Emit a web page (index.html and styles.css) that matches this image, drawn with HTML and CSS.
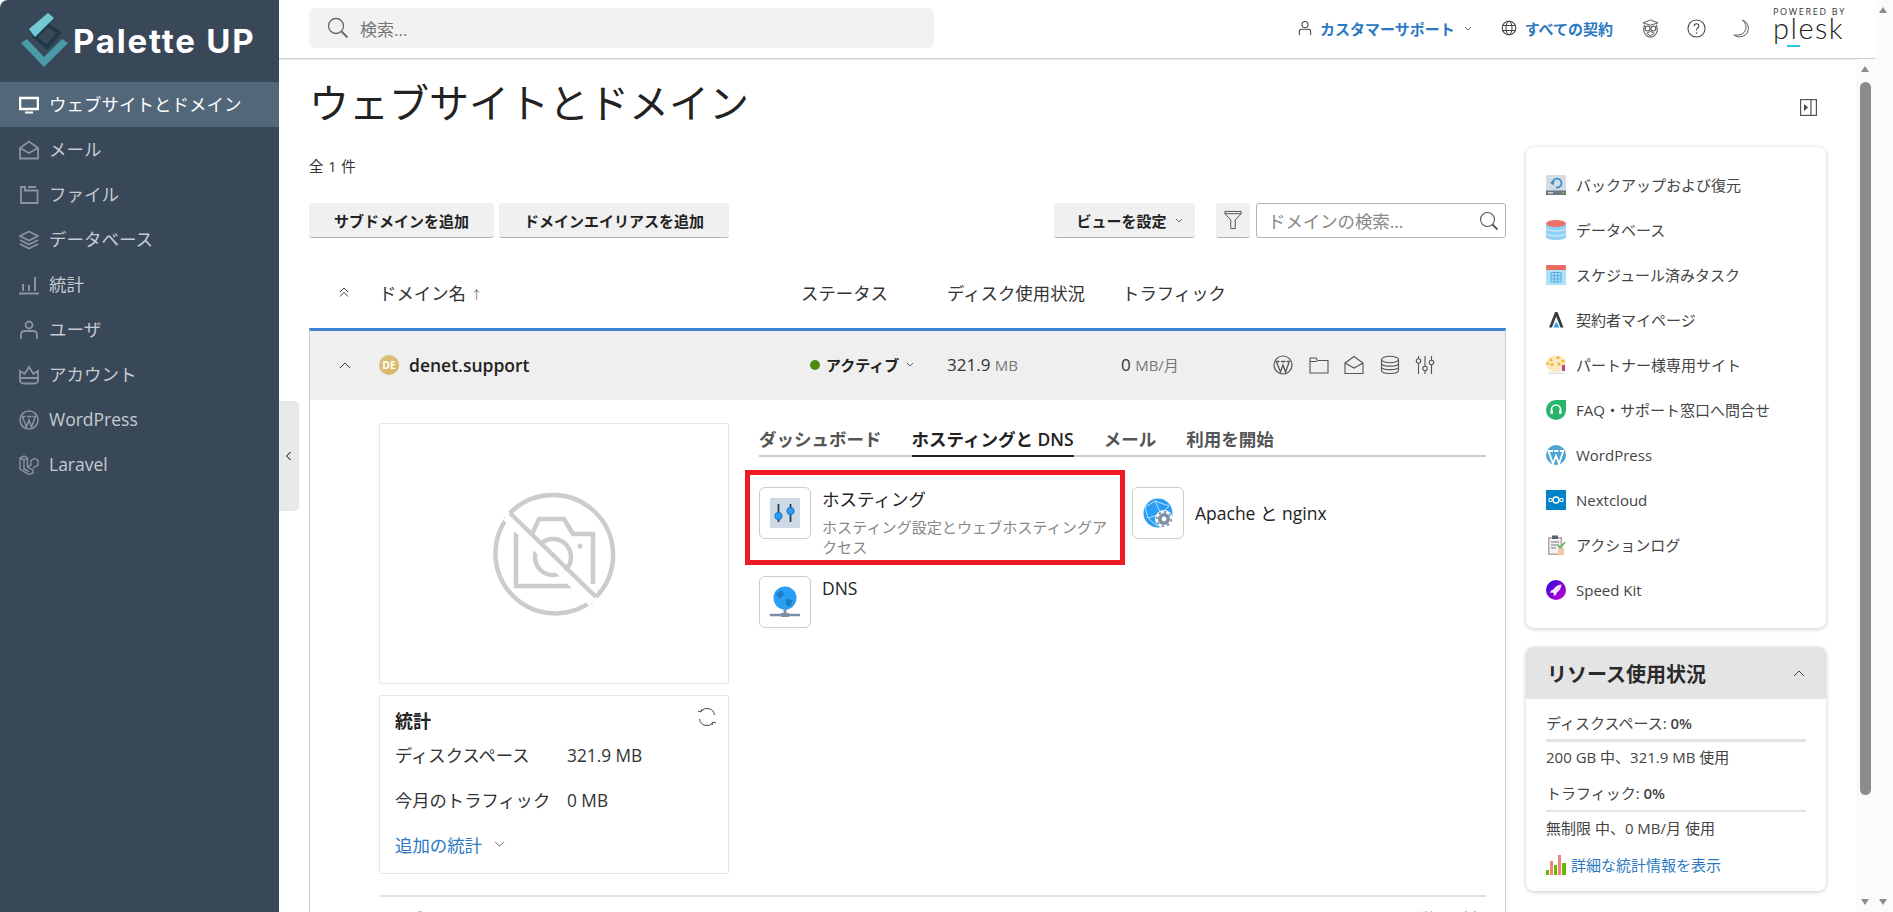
FILE: index.html
```html
<!DOCTYPE html>
<html lang="ja">
<head>
    <meta charset="UTF-8">
    <meta name="viewport" content="width=device-width, initial-scale=1.0">
    <title>ウェブサイトとドメイン</title>
    <link rel="stylesheet" href="styles.css">
</head>
<body>
<div class="app">
    <aside class="sidebar">
        <div class="brand">
            <svg class="brand-mark" viewBox="0 0 50 56" width="50" height="56">
                <path d="M28 13 L39 21 L27 35 L15 25 Z" fill="none" stroke="#1f3a46" stroke-width="4"/>
                <path d="M9 17 L28 1 L34 6 L15 25 Z" fill="#73c8d6"/>
                <path d="M1 31 L24 55 L48 31 L42 27 L24 45 L7 27 Z" fill="#4a9ba8"/>
            </svg>
            <span class="brand-name">Palette UP</span>
        </div>
        <nav class="menu">
            <a class="menu-item active" href="#">
                <svg viewBox="0 0 20 20"><rect x="1" y="3" width="18" height="11" fill="none" stroke="currentColor" stroke-width="2.5"/><rect x="6" y="16.5" width="8" height="2" fill="currentColor"/></svg>
                <span>ウェブサイトとドメイン</span>
            </a>
            <a class="menu-item" href="#">
                <svg viewBox="0 0 20 20"><path d="M1 8 L10 1.5 L19 8 V18.5 H1 Z M1 8 L10 13 L19 8" fill="none" stroke="currentColor" stroke-width="1.8"/></svg>
                <span>メール</span>
            </a>
            <a class="menu-item" href="#">
                <svg viewBox="0 0 20 20"><path d="M2 2 H6 V5.5 H18.5 V18 H2 Z M9 2 H17" fill="none" stroke="currentColor" stroke-width="1.8"/></svg>
                <span>ファイル</span>
            </a>
            <a class="menu-item" href="#">
                <svg viewBox="0 0 20 20"><path d="M10 1.5 L19 6 L10 10.5 L1 6 Z M1 10 L10 14.5 L19 10 M1 14 L10 18.5 L19 14" fill="none" stroke="currentColor" stroke-width="1.8"/></svg>
                <span>データベース</span>
            </a>
            <a class="menu-item" href="#">
                <svg viewBox="0 0 20 20"><path d="M0 18.5 H20 M4 16 V9 M10 16 V10 M16 16 V2" fill="none" stroke="currentColor" stroke-width="2"/></svg>
                <span>統計</span>
            </a>
            <a class="menu-item" href="#">
                <svg viewBox="0 0 20 20"><circle cx="10" cy="5" r="3.5" fill="none" stroke="currentColor" stroke-width="1.8"/><path d="M2 19 V15 Q2 11 6 11 H14 Q18 11 18 15 V19" fill="none" stroke="currentColor" stroke-width="1.8"/></svg>
                <span>ユーザ</span>
            </a>
            <a class="menu-item" href="#">
                <svg viewBox="0 0 20 20"><path d="M1 6 L5.5 9 L10 2 L14.5 9 L19 6 V15 Q19 18.5 15 18.5 H5 Q1 18.5 1 15 Z M1 13 H19" fill="none" stroke="currentColor" stroke-width="1.8"/></svg>
                <span>アカウント</span>
            </a>
            <a class="menu-item" href="#">
                <svg viewBox="0 0 20 20"><circle cx="10" cy="10" r="9" fill="none" stroke="currentColor" stroke-width="1.5"/><path d="M3.5 7 L7.5 17 L10 10 L12.5 17 L16 7.5 M2.5 6.5 H6.5 M8 6.5 H12.5 M13.5 6.5 H17" fill="none" stroke="currentColor" stroke-width="1.5"/></svg>
                <span>WordPress</span>
            </a>
            <a class="menu-item" href="#">
                <svg viewBox="0 0 20 20"><path d="M1 3 L5 1 L8.5 3 V12 L14 15 V18 L10 19.5 L1 14 Z M8.5 12 L12 10 V5.5 L15.5 3.5 L19 5.5 V10 L14 13 M1 3 L5 5 L8.5 3 M5 5 V14 L10 16.5" fill="none" stroke="currentColor" stroke-width="1.4"/></svg>
                <span>Laravel</span>
            </a>
        </nav>
    </aside>

    <div class="collapse-tab">
        <svg viewBox="0 0 10 12" width="8" height="10"><path d="M7 1 L2 6 L7 11" fill="none" stroke="#333" stroke-width="1.3"/></svg>
    </div>

    <div class="main">
        <header class="topbar">
            <div class="global-search">
                <svg viewBox="0 0 22 22" width="22" height="22"><circle cx="9" cy="9" r="7.5" fill="none" stroke="#666" stroke-width="1.3"/><path d="M14.5 14.5 L20.5 20.5" stroke="#666" stroke-width="1.8"/></svg>
                <span>検索...</span>
            </div>
            <div class="topbar-right">
                <a class="top-link" href="#">
                    <svg viewBox="0 0 16 18" width="14" height="16"><circle cx="8" cy="5" r="3.5" fill="none" stroke="#444" stroke-width="1.2"/><path d="M1.5 17 V13 Q1.5 10.5 4 10.5 H12 Q14.5 10.5 14.5 13 V17" fill="none" stroke="#444" stroke-width="1.2"/></svg>
                    <span>カスタマーサポート</span>
                    <svg class="caret" viewBox="0 0 8 5" width="8" height="5"><path d="M1 1 L4 4 L7 1" fill="none" stroke="#666" stroke-width="1"/></svg>
                </a>
                <a class="top-link subs" href="#">
                    <svg viewBox="0 0 16 16" width="16" height="16"><circle cx="8" cy="8" r="6.8" fill="none" stroke="#444" stroke-width="1.1"/><ellipse cx="8" cy="8" rx="3" ry="6.8" fill="none" stroke="#444" stroke-width="1"/><path d="M1.5 5.5 H14.5 M1.5 10.5 H14.5" stroke="#444" stroke-width="1"/></svg>
                    <span>すべての契約</span>
                </a>
                <svg class="top-icon owl" viewBox="0 0 18 20" width="17" height="19"><path d="M1 4 L9 1 L17 4 L9 6.5 Z" fill="none" stroke="#555" stroke-width="1"/><path d="M3 6 Q1 10 2 13 Q4 19 9 19 Q14 19 16 13 Q17 10 15 6" fill="none" stroke="#555" stroke-width="1.1"/><circle cx="6" cy="10" r="2.6" fill="none" stroke="#555" stroke-width="1.1"/><circle cx="12" cy="10" r="2.6" fill="none" stroke="#555" stroke-width="1.1"/><path d="M5 15 L9 13 L13 15 L9 18 Z" fill="none" stroke="#555" stroke-width="1"/></svg>
                <svg class="top-icon help" viewBox="0 0 20 20" width="19" height="19"><circle cx="10" cy="10" r="9" fill="none" stroke="#444" stroke-width="1.1"/><path d="M7.5 7.5 Q7.5 5 10 5 Q12.5 5 12.5 7.2 Q12.5 8.8 10.8 9.8 Q10 10.4 10 12" fill="none" stroke="#444" stroke-width="1.1"/><circle cx="10" cy="14.8" r=".8" fill="#444"/></svg>
                <svg class="top-icon moon" viewBox="0 0 18 20" width="17" height="19"><path d="M11 1 Q16 5 14.5 11 Q12.5 18 2 17 Q6 20 11 18.5 Q18 16 17.3 8.5 Q16.5 3 11 1 Z" fill="#fff" stroke="#555" stroke-width="1"/></svg>
                <div class="plesk">
                    <span class="plesk-by">POWERED BY</span>
                    <span class="plesk-name">plesk</span>
                    <i class="plesk-dash"></i>
                </div>
            </div>
        </header>

        <div class="workspace">
            <div class="content">
                <div class="title-row">
                    <h1>ウェブサイトとドメイン</h1>
                    <svg class="panel-toggle" viewBox="0 0 17 17" width="17" height="17"><rect x=".6" y=".6" width="15.8" height="15.8" fill="none" stroke="#555" stroke-width="1.2"/><path d="M11 1 V16" stroke="#555" stroke-width="1.2"/><path d="M4 5 L8 8.5 L4 12 Z" fill="#444"/></svg>
                </div>
                <div class="columns">
                    <section class="domains">
                        <p class="count">全 1 件</p>
                        <div class="toolbar">
                            <button class="btn">サブドメインを追加</button>
                            <button class="btn">ドメインエイリアスを追加</button>
                            <div class="toolbar-right">
                                <button class="btn btn-view">ビューを設定<svg class="caret" viewBox="0 0 8 5" width="8" height="5"><path d="M1 1 L4 4 L7 1" fill="none" stroke="#666" stroke-width="1"/></svg></button>
                                <button class="btn btn-filter"><svg viewBox="0 0 20 22" width="18" height="20"><path d="M1 1.5 H19 V4 L12.5 11 V20.5 H7.5 V11 L1 4 Z M1 4 H19" fill="none" stroke="#555" stroke-width="1.1"/></svg></button>
                                <div class="domain-search">
                                    <span>ドメインの検索...</span>
                                    <svg viewBox="0 0 20 20" width="20" height="20"><circle cx="8.5" cy="8.5" r="7" fill="none" stroke="#555" stroke-width="1.1"/><path d="M13.5 13.5 L18.5 18.5" stroke="#555" stroke-width="1.8"/></svg>
                                </div>
                            </div>
                        </div>

                        <div class="table-head">
                            <svg viewBox="0 0 12 12" width="12" height="12"><path d="M2 6 L6 2 L10 6 M2 10.5 L6 6.5 L10 10.5" fill="none" stroke="#444" stroke-width="1"/></svg>
                            <span class="head-name">ドメイン名 <small>↑</small></span>
                            <span>ステータス</span>
                            <span>ディスク使用状況</span>
                            <span>トラフィック</span>
                        </div>

                        <div class="domain">
                            <div class="domain-row">
                                <svg viewBox="0 0 12 8" width="12" height="8"><path d="M1 7 L6 2 L11 7" fill="none" stroke="#444" stroke-width="1"/></svg>
                                <div class="domain-name"><i class="avatar">DE</i><strong>denet.support</strong></div>
                                <div class="status"><i class="dot"></i><b>アクティブ</b><svg class="caret" viewBox="0 0 8 5" width="8" height="5"><path d="M1 1 L4 4 L7 1" fill="none" stroke="#666" stroke-width="1"/></svg></div>
                                <div class="usage">321.9 <small>MB</small></div>
                                <div class="usage">0 <small>MB/月</small></div>
                                <div class="row-icons">
                                    <svg viewBox="0 0 20 20"><circle cx="10" cy="10" r="9" fill="none" stroke="#555" stroke-width="1.2"/><path d="M3.5 7 L7.5 17 L10 10 L12.5 17 L16 7.5 M2.5 6.5 H6.5 M8 6.5 H12.5 M13.5 6.5 H17" fill="none" stroke="#555" stroke-width="1.3"/></svg>
                                    <svg viewBox="0 0 20 20"><path d="M1 3 H7 L8.5 5.5 H19 V18 H1 Z M1 6.5 H8" fill="none" stroke="#555" stroke-width="1.1"/></svg>
                                    <svg viewBox="0 0 20 20"><path d="M1 8 L10 1.5 L19 8 V18.5 H1 Z M1 8 L10 13 L19 8" fill="none" stroke="#555" stroke-width="1.1"/></svg>
                                    <svg viewBox="0 0 20 20"><ellipse cx="10" cy="4.5" rx="8.5" ry="3.2" fill="none" stroke="#555" stroke-width="1.1"/><path d="M1.5 4.5 V15.5 C1.5 19.5 18.5 19.5 18.5 15.5 V4.5 M1.5 8.5 C1.5 12 18.5 12 18.5 8.5 M1.5 12 C1.5 15.5 18.5 15.5 18.5 12" fill="none" stroke="#555" stroke-width="1.1"/></svg>
                                    <svg viewBox="0 0 20 20"><path d="M3.5 1 V19 M10 1 V19 M16.5 1 V19" stroke="#555" stroke-width="1.1"/><circle cx="3.5" cy="6" r="2.2" fill="#efefef" stroke="#555" stroke-width="1.1"/><circle cx="10" cy="13.5" r="2.2" fill="#efefef" stroke="#555" stroke-width="1.1"/><circle cx="16.5" cy="7.5" r="2.2" fill="#efefef" stroke="#555" stroke-width="1.1"/></svg>
                                </div>
                            </div>
                            <div class="domain-body">
                                <div class="side">
                                    <div class="preview">
                                        <svg viewBox="0 0 124 124" width="124" height="124" fill="none" stroke="#ccc" stroke-width="4.5">
                                            <path d="M33 42 H24 V94 H81 M40 42 L47 27 H72 L81 42 H101 V92"/>
                                            <circle cx="61" cy="65" r="18"/>
                                            <circle cx="88" cy="54" r="2.5" fill="#ccc" stroke="none"/>
                                            <path d="M18 21 A60 60 0 1 1 104 105"/>
                                            <path d="M15 26 A60 60 0 0 0 100 109"/>
                                            <path d="M14 25 L100 111" stroke="#fff" stroke-width="8"/>
                                            <path d="M18 21 L104 105"/>
                                        </svg>
                                    </div>
                                    <div class="stats">
                                        <h3>統計</h3>
                                        <svg class="refresh" viewBox="0 0 20 20" width="20" height="20"><path d="M17.5 8 A7.5 7.5 0 0 0 4 4.5 M2.5 12 A7.5 7.5 0 0 0 16 15.5 M1 4 L3.5 5 L5 2 M19 16 L16.5 15 L15 18" fill="none" stroke="#444" stroke-width="1"/></svg>
                                        <dl>
                                            <dt>ディスクスペース</dt><dd>321.9 MB</dd>
                                            <dt>今月のトラフィック</dt><dd>0 MB</dd>
                                        </dl>
                                        <a class="more" href="#">追加の統計<svg viewBox="0 0 12 8" width="11" height="7"><path d="M1 1 L6 6 L11 1" fill="none" stroke="#555" stroke-width="1"/></svg></a>
                                    </div>
                                </div>
                                <div class="panel">
                                    <div class="tabs">
                                        <a href="#">ダッシュボード</a>
                                        <a class="current" href="#">ホスティングと DNS</a>
                                        <a href="#">メール</a>
                                        <a href="#">利用を開始</a>
                                    </div>
                                    <div class="tools">
                                        <div class="tool tool-marked">
                                            <div class="tile">
                                                <svg viewBox="0 0 30 30" width="30" height="30"><rect width="30" height="30" fill="#cdd9e4"/><path d="M8.5 6 V24 M20.5 6 V24" stroke="#2b3a4c" stroke-width="1.8"/><circle cx="8.5" cy="18" r="3.6" fill="#2a9df4" stroke="#1074c4"/><circle cx="20.5" cy="13" r="3.6" fill="#2a9df4" stroke="#1074c4"/></svg>
                                            </div>
                                            <div class="tool-text">
                                                <h4>ホスティング</h4>
                                                <p>ホスティング設定とウェブホスティングアクセス</p>
                                            </div>
                                        </div>
                                        <div class="tool tool-center">
                                            <div class="tile">
                                                <svg viewBox="0 0 30 30" width="30" height="30"><circle cx="15" cy="15" r="14.5" fill="#2a9df4"/><path d="M2 9 L12 3 L26 8 L18 16 L5 20 Z M12 3 L18 16 M5 20 L14 28" fill="none" stroke="#b9e2fb" stroke-width="1"/><circle cx="21" cy="21" r="9" fill="#fff"/><circle cx="21" cy="21" r="6" fill="#7d8fa6"/><circle cx="21" cy="21" r="2.4" fill="#fff"/><circle cx="21" cy="21" r="7.2" fill="none" stroke="#7d8fa6" stroke-width="1.8" stroke-dasharray="2.5 3.1"/></svg>
                                            </div>
                                            <div class="tool-text"><h4>Apache と nginx</h4></div>
                                        </div>
                                        <div class="tool">
                                            <div class="tile">
                                                <svg viewBox="0 0 30 32" width="30" height="32"><circle cx="15" cy="12" r="11.5" fill="#2a9df4"/><path d="M6 8 L12 4 L14 9 L9 13 Z M16 13 L23 14 L20 21 L16 19 Z" fill="#1d7cc4"/><path d="M15 23 V28" stroke="#7d8fa6" stroke-width="3"/><path d="M0 29 H30" stroke="#7d8fa6" stroke-width="2.5"/><rect x="11" y="27" width="8" height="4" fill="#7d8fa6"/></svg>
                                            </div>
                                            <div class="tool-text"><h4>DNS</h4></div>
                                        </div>
                                    </div>
                                </div>
                            </div>
                            <div class="domain-foot">
                                <p>ウェブサイト: <a href="#">denet.support</a>　IP アドレス: <b>133.167.231.23</b>　システムユーザー: <b>pfxxxxxx</b></p>
                                <a href="#">詳細を追加</a>
                            </div>
                        </div>
                    </section>

                    <aside class="right">
                        <div class="card links">
                            <a href="#"><svg viewBox="0 0 20 20"><rect y="0" width="20" height="20" rx="1.5" fill="#d3dde3"/><rect y="15.5" width="20" height="4.5" fill="#6c7a86"/><rect x="2" y="17" width="5" height="1.5" fill="#cfd6db"/><rect x="16" y="17" width="2" height="1.5" fill="#8bc34a"/><path d="M6.5 8.5 A4.5 4.5 0 1 1 10 12.5" fill="none" stroke="#3d8fc8" stroke-width="1.8"/><path d="M3.8 7.5 L8.5 6 L7.5 10.5 Z" fill="#3d8fc8"/></svg><span>バックアップおよび復元</span></a>
                            <a href="#"><svg viewBox="0 0 20 20"><path d="M0 3 H20 V17 C20 21 0 21 0 17 Z" fill="#8fd0f4"/><path d="M0 8 C0 12 20 12 20 8 M0 13 C0 17 20 17 20 13" fill="none" stroke="#dff3fd" stroke-width="1"/><ellipse cx="10" cy="3.5" rx="10" ry="3.5" fill="#f0706a"/></svg><span>データベース</span></a>
                            <a href="#"><svg viewBox="0 0 20 20"><rect y="1" width="20" height="19" fill="#aee0fa"/><rect y="0" width="20" height="5" rx="1" fill="#ee6b66"/><path d="M5 7.5 H15 V17 H5 Z M8.3 7.5 V17 M11.7 7.5 V17 M5 10.7 H15 M5 13.9 H15" fill="none" stroke="#4a9fd4" stroke-width=".8"/></svg><span>スケジュール済みタスク</span></a>
                            <a href="#"><svg viewBox="0 0 20 20"><path d="M3 17.5 L9 2 H11.5 L17.5 17.5 H14.5 L10.2 6.5 L6 17.5 Z" fill="#3c3c3c"/><path d="M10.2 11.5 L13.5 17.5 H7.5 Z" fill="#2a9df4"/></svg><span>契約者マイページ</span></a>
                            <a href="#"><svg viewBox="0 0 20 20"><ellipse cx="10" cy="9" rx="10" ry="8.5" fill="#fbe7c0"/><circle cx="5" cy="5" r="1.5" fill="#f5b32e"/><circle cx="12" cy="2.5" r="1.5" fill="#f5b32e"/><circle cx="6" cy="9.5" r="1.5" fill="#f5b32e"/><circle cx="13" cy="9" r="1.5" fill="#f5b32e"/><circle cx="1.5" cy="8.5" r="1.3" fill="#f5b32e"/><circle cx="17" cy="6" r="1.5" fill="#f5b32e"/><rect x="16" y="10" width="3" height="6" fill="#c2438a"/><rect x="2" y="17.5" width="16" height="1.5" fill="#dde3e6"/></svg><span>パートナー様専用サイト</span></a>
                            <a href="#"><svg viewBox="0 0 20 20"><path d="M10 0 H20 V10 A10 10 0 1 1 10 0 Z" fill="#27b56c"/><path d="M5.5 12 V9.5 A4.5 4.5 0 0 1 14.5 9.5 V12" fill="none" stroke="#fff" stroke-width="1.6"/><rect x="4.5" y="10" width="2.5" height="4" rx="1" fill="#fff"/><rect x="13" y="10" width="2.5" height="4" rx="1" fill="#fff"/></svg><span>FAQ・サポート窓口へ問合せ</span></a>
                            <a href="#"><svg viewBox="0 0 20 20"><circle cx="10" cy="10" r="10" fill="#4ea6d0"/><path d="M2.5 6.5 L7 18.5 L10 11 L13 18.5 L17 7 M1.5 6 H7 M8 6 H12.5 M14 6 H18" fill="none" stroke="#fff" stroke-width="1.8"/></svg><span>WordPress</span></a>
                            <a href="#"><svg viewBox="0 0 20 20"><rect width="20" height="20" fill="#0082c9"/><circle cx="10" cy="10" r="3" fill="none" stroke="#fff" stroke-width="1.3"/><circle cx="4.5" cy="10" r="1.7" fill="none" stroke="#fff" stroke-width="1.1"/><circle cx="15.5" cy="10" r="1.7" fill="none" stroke="#fff" stroke-width="1.1"/></svg><span>Nextcloud</span></a>
                            <a href="#"><svg viewBox="0 0 20 20"><rect x="2" y="2" width="14" height="18" fill="#b9a59c"/><rect x="3.5" y="3.5" width="11" height="15" fill="#f4f2ef"/><rect x="6" y="0.5" width="6" height="3.5" fill="#56636e"/><path d="M5 7 H13 M5 10 H12 M5 13 H10" stroke="#6d7b86" stroke-width="1.1"/><path d="M12 10 L14 13 L19 7" fill="none" stroke="#63b955" stroke-width="1.8"/><path d="M12 20 V14 L18 12.5 V20 Z" fill="#f6c4a6"/></svg><span>アクションログ</span></a>
                            <a href="#"><svg viewBox="0 0 20 20"><defs><linearGradient id="speed" x1="0" y1="0" x2="1" y2="1"><stop offset="0" stop-color="#2d07d8"/><stop offset="1" stop-color="#c502d2"/></linearGradient></defs><circle cx="10" cy="10" r="10" fill="url(#speed)"/><path d="M15.5 4.5 Q10 5 7.5 9.5 L5 10.5 L4 13 L6.5 12.5 L8 14 L7.5 16 L10 15 L11 12.5 Q15 10 15.5 4.5 Z" fill="#f4e6ff"/></svg><span>Speed Kit</span></a>
                        </div>
                        <div class="card resources">
                            <div class="resources-head">
                                <h2>リソース使用状況</h2>
                                <svg viewBox="0 0 12 8" width="12" height="8"><path d="M1 7 L6 2 L11 7" fill="none" stroke="#444" stroke-width="1"/></svg>
                            </div>
                            <div class="resources-body">
                                <div class="meter">ディスクスペース: <b>0%</b></div>
                                <div class="bar bar-thick"></div>
                                <div class="meter-sub">200 GB 中、321.9 MB 使用</div>
                                <div class="meter meter-next">トラフィック: <b>0%</b></div>
                                <div class="bar bar-thin"></div>
                                <div class="meter-sub sub-thin">無制限 中、0 MB/月 使用</div>
                                <a class="detail" href="#">
                                    <svg viewBox="0 0 20 20" width="20" height="20"><rect x="4" y="6" width="3" height="14" fill="#f0837a"/><rect x="12" y="0" width="3" height="20" fill="#f0837a"/><rect x="0" y="15" width="3" height="5" fill="#70b500"/><rect x="8" y="10" width="3" height="10" fill="#70b500"/><rect x="16" y="8" width="4" height="12" fill="#70b500"/></svg>
                                    <span>詳細な統計情報を表示</span>
                                </a>
                            </div>
                        </div>
                    </aside>
                </div>
            </div>
            <div class="scroll-inner">
                <i class="arrow-up"></i>
                <i class="thumb"></i>
                <i class="arrow-down"></i>
            </div>
        </div>
    </div>

    <div class="scroll-outer">
        <i class="arrow-up"></i>
        <i class="arrow-down"></i>
    </div>
</div>
</body>
</html>
```

FILE: styles.css
```css
*, *::after {
    box-sizing: border-box;
}
html, body {
    margin: 0;
    height: 100%;
    overflow: hidden;
}
body {
    font-family: "Open Sans", "Noto Sans CJK JP", sans-serif;
    color: #333;
    background: #fff;
    font-size: 16px;
}
a {
    text-decoration: none;
    color: inherit;
}
h1, h2, h3, h4, p, dl, dt, dd {
    margin: 0;
    padding: 0;
    font-weight: normal;
}
button {
    font-family: inherit;
}
svg {
    flex: none;
    display: block;
}
.app {
    display: flex;
    height: 912px;
    position: relative;
}

/* sidebar */
.sidebar {
    width: 279px;
    flex: none;
    background: #394859;
    border-top-left-radius: 8px;
}
.brand {
    height: 82px;
    display: flex;
    align-items: center;
    padding-left: 20px;
    gap: 3px;
}
.brand-mark {
    margin-top: -2px;
}
.brand-name {
    font-family: "Inter", sans-serif;
    font-weight: 700;
    font-size: 33px;
    letter-spacing: 1.8px;
    color: #fff;
    margin-top: -1px;
}
.menu-item {
    height: 45px;
    display: flex;
    align-items: center;
    padding: 0 0 2px 19px;
    color: #c6cbd1;
    font-size: 17.5px;
}
.menu-item svg {
    width: 20px;
    height: 20px;
    margin: 2px 10px 0 0;
    color: #8b939e;
}
.menu-item.active {
    background: #52677a;
    color: #fff;
}
.menu-item.active svg {
    color: #fff;
}
.collapse-tab {
    position: absolute;
    left: 279px;
    top: 401px;
    width: 20px;
    height: 110px;
    background: #e9e9e9;
    border-radius: 0 5px 5px 0;
    display: flex;
    align-items: center;
    justify-content: center;
}

/* top bar */
.main {
    flex: 1;
    min-width: 0;
    display: flex;
    flex-direction: column;
}
.topbar {
    height: 59px;
    flex: none;
    display: flex;
    align-items: center;
    padding: 0 30px 2px 30px;
    border-bottom: 1px solid #ccc;
    box-shadow: 0 1px 1px rgba(0, 0, 0, 0.08);
}
.global-search {
    width: 625px;
    height: 40px;
    background: #f2f2f2;
    border-radius: 6px;
    display: flex;
    align-items: center;
    padding-left: 18px;
    gap: 11px;
    color: #777;
    font-size: 17px;
}
.topbar-right {
    margin-left: auto;
    display: flex;
    align-items: center;
}
.top-link {
    display: flex;
    align-items: center;
    color: #2b79c2;
    font-weight: 600;
    font-size: 15px;
    gap: 8px;
}
.top-link .caret {
    margin-left: 1px;
}
.subs {
    margin-left: 29px;
}
.owl {
    margin-left: 29px;
}
.help {
    margin-left: 28px;
}
.moon {
    margin-left: 26px;
}
.plesk {
    position: relative;
    margin-left: 24px;
    width: 72px;
    height: 48px;
}
.plesk-by {
    display: block;
    font-size: 9px;
    line-height: 10px;
    letter-spacing: 1.7px;
    margin-top: 3px;
    color: #333;
    white-space: nowrap;
}
.plesk-name {
    display: block;
    font-family: "Lato", sans-serif;
    font-weight: 300;
    font-size: 29px;
    line-height: 22px;
    letter-spacing: 1.5px;
    color: #222;
}
.plesk-dash {
    position: absolute;
    left: 14px;
    top: 41px;
    width: 13px;
    height: 2px;
    background: #29c5ea;
}

/* content */
.workspace {
    flex: 1;
    min-height: 0;
    display: flex;
    overflow: hidden;
}
.content {
    flex: 1;
    min-width: 0;
    padding: 0 31px 0 30px;
}
.title-row {
    height: 88px;
    display: flex;
    align-items: center;
    justify-content: space-between;
}
h1 {
    font-size: 40px;
    line-height: 56px;
    color: #222;
}
.panel-toggle {
    margin-right: 9px;
    margin-top: 9px;
}
.columns {
    display: flex;
    gap: 20px;
}
.domains {
    width: 1197px;
    flex: none;
}
.count {
    font-size: 14.5px;
    line-height: 20px;
    margin-top: 10px;
    word-spacing: 1px;
}
.toolbar {
    display: flex;
    margin-top: 26px;
    gap: 5px;
}
.toolbar-right {
    margin-left: auto;
    display: flex;
}
.btn {
    height: 35px;
    padding: 0 25px;
    border: 0;
    border-bottom: 1px solid #b5b5b5;
    border-radius: 3px;
    background: #f0f0f0;
    color: #222;
    font-weight: 700;
    font-size: 15px;
}
.btn-view {
    width: 141px;
    padding: 0 0 0 10px;
    display: flex;
    align-items: center;
    justify-content: center;
    gap: 8px;
    margin-right: 21px;
}
.btn-filter {
    width: 34px;
    padding: 0;
    display: flex;
    align-items: center;
    justify-content: center;
    margin-right: 6px;
}
.domain-search {
    width: 250px;
    height: 35px;
    border: 1px solid #b5b5b5;
    border-radius: 3px;
    display: flex;
    align-items: center;
    justify-content: space-between;
    padding: 0 6px 0 11px;
    color: #888;
    font-size: 17.4px;
}

/* domain table */
.table-head, .domain-row {
    display: grid;
    grid-template-columns: 70px 422px 146px 175px 150px auto;
    align-items: center;
}
.table-head {
    height: 90px;
    padding-top: 18px;
    font-size: 17.4px;
    color: #333;
}
.table-head svg {
    margin-left: 29px;
}
.head-name small {
    font-size: 12px;
    color: #777;
}
.domain {
    border: 1px solid #ccc;
    border-top: 3px solid #3d85d0;
    border-bottom: 0;
}
.domain-row {
    grid-template-columns: 69px 422px 146px 174px 152px auto;
    height: 69px;
    padding-bottom: 2px;
    background: #efefef;
}
.domain-row > svg {
    margin-left: 29px;
}
.domain-name {
    display: flex;
    align-items: center;
    gap: 10px;
}
.domain-name strong {
    font-weight: 600;
    font-size: 17.5px;
    color: #222;
}
.avatar {
    width: 20px;
    height: 20px;
    border-radius: 50%;
    background: linear-gradient(135deg, #d9c07c, #dcb660);
    color: #fff;
    font-style: normal;
    font-weight: 700;
    font-size: 10.5px;
    line-height: 20px;
    text-align: center;
}
.status {
    display: flex;
    align-items: center;
    padding-left: 9px;
    font-size: 15px;
}
.dot {
    width: 10px;
    height: 10px;
    border-radius: 50%;
    background: #4f8a10;
    margin-right: 6px;
}
.status b {
    color: #222;
}
.status .caret {
    margin-left: 7px;
}
.usage {
    font-size: 17px;
    color: #333;
}
.usage small {
    font-size: 15px;
    color: #777;
}
.row-icons {
    display: flex;
    gap: 15.5px;
}
.row-icons svg {
    width: 20px;
    height: 20px;
}
.domain-body {
    display: flex;
    padding: 23px 19px 21px 69px;
    gap: 30px;
}
.side {
    width: 350px;
    flex: none;
}
.preview {
    height: 261px;
    border: 1px solid #e6e6e6;
    border-radius: 2px;
    display: flex;
    align-items: center;
    justify-content: center;
}
.stats {
    position: relative;
    height: 179px;
    margin-top: 11px;
    border: 1px solid #e6e6e6;
    border-radius: 2px;
    padding: 12px 15px;
}
.stats h3 {
    font-size: 18px;
    font-weight: 700;
    line-height: 26px;
    color: #222;
}
.refresh {
    position: absolute;
    top: 11px;
    right: 11px;
}
.stats dl {
    display: grid;
    grid-template-columns: 172px auto;
    font-size: 17.3px;
    line-height: 45px;
    margin-top: -1px;
}
.more {
    display: flex;
    align-items: center;
    gap: 12px;
    color: #2b79c2;
    font-size: 17.4px;
    margin-top: 9px;
}
.panel {
    flex: 1;
    min-width: 0;
}
.tabs {
    display: flex;
    gap: 30px;
    height: 34px;
    border-bottom: 2px solid #ccc;
    font-size: 17.5px;
    font-weight: 600;
    color: #555;
}
.tabs a {
    height: 34px;
    line-height: 32px;
}
.tabs .current {
    color: #222;
    border-bottom: 2px solid #222;
}
.tools {
    display: grid;
    grid-template-columns: 373px 1fr;
    margin-top: 30px;
    row-gap: 19px;
}
.tool {
    display: flex;
    gap: 11px;
    align-items: flex-start;
}
.tool-center {
    align-items: center;
    align-self: start;
    height: 52px;
}
.tile {
    width: 52px;
    height: 52px;
    border: 1px solid #ccc;
    border-radius: 6px;
    flex: none;
    display: flex;
    align-items: center;
    justify-content: center;
}
.tool-text h4 {
    font-size: 17.5px;
    line-height: 24px;
    color: #222;
}
.tool-text p {
    font-size: 15.1px;
    line-height: 20px;
    color: #888;
    margin-top: 6px;
    width: 292px;
}
.tool-marked {
    position: relative;
}
.tool-marked::after {
    content: "";
    position: absolute;
    left: -14px;
    top: -17px;
    width: 380px;
    height: 95px;
    border: 5px solid #ed1c24;
    pointer-events: none;
}
.domain-foot {
    margin-left: 69px;
    margin-right: 19px;
    border-top: 2px solid #e2e2e2;
    padding-top: 12px;
    display: flex;
    justify-content: space-between;
    font-size: 14.5px;
    line-height: 20px;
}
.domain-foot a {
    color: #2b79c2;
}
.domain-foot p {
    color: #666;
}
.domain-foot b {
    color: #222;
    font-weight: 600;
}

/* right column */
.right {
    width: 300px;
    flex: none;
}
.card {
    background: #fff;
    border-radius: 8px;
    box-shadow: 0 1px 4px rgba(0, 0, 0, 0.22);
}
.links {
    height: 481px;
    padding: 15px 20px;
}
.links a {
    display: flex;
    align-items: center;
    height: 45px;
    gap: 10px;
    font-size: 15px;
    color: #444;
}
.links svg {
    width: 20px;
    height: 20px;
}
.resources {
    margin-top: 19px;
    height: 244px;
    overflow: hidden;
}
.resources-head {
    height: 52px;
    background: #e4e4e4;
    display: flex;
    align-items: center;
    justify-content: space-between;
    padding: 0 21px;
}
.resources-head h2 {
    font-size: 20px;
    font-weight: 700;
    color: #2a2a2a;
}
.resources-body {
    padding: 14px 20px 0;
    font-size: 15px;
    color: #444;
}
.meter {
    line-height: 20px;
}
.meter b {
    font-weight: 600;
}
.meter-next {
    margin-top: 16px;
}
.meter-sub {
    line-height: 20px;
    margin-top: 5px;
}
.sub-thin {
    margin-top: 6px;
}
.bar {
    margin-top: 6px;
    background: #e4e4e4;
}
.bar-thick {
    height: 3px;
}
.bar-thin {
    height: 2px;
    margin-top: 7px;
}
.detail {
    display: flex;
    align-items: center;
    gap: 5px;
    margin-top: 16px;
    color: #2b79c2;
}

/* scrollbars drawn as plain boxes */
.scroll-inner {
    width: 18px;
    flex: none;
    position: relative;
    background: #fbfbfb;
    border-left: 1px solid #f2f2f2;
}
.scroll-outer {
    width: 18px;
    flex: none;
    position: relative;
    background: #fbfbfb;
}
.thumb {
    position: absolute;
    left: 2px;
    top: 23px;
    width: 11px;
    height: 713px;
    background: #8c8c8c;
    border-radius: 6px;
}
.arrow-up, .arrow-down {
    position: absolute;
    left: 4px;
    width: 0;
    height: 0;
    border-left: 4.5px solid transparent;
    border-right: 4.5px solid transparent;
}
.scroll-inner .arrow-up, .scroll-inner .arrow-down {
    left: 3px;
}
.arrow-up {
    top: 7px;
    border-bottom: 6px solid #8c8c8c;
}
.arrow-down {
    bottom: 7px;
    border-top: 6px solid #8c8c8c;
}
```
